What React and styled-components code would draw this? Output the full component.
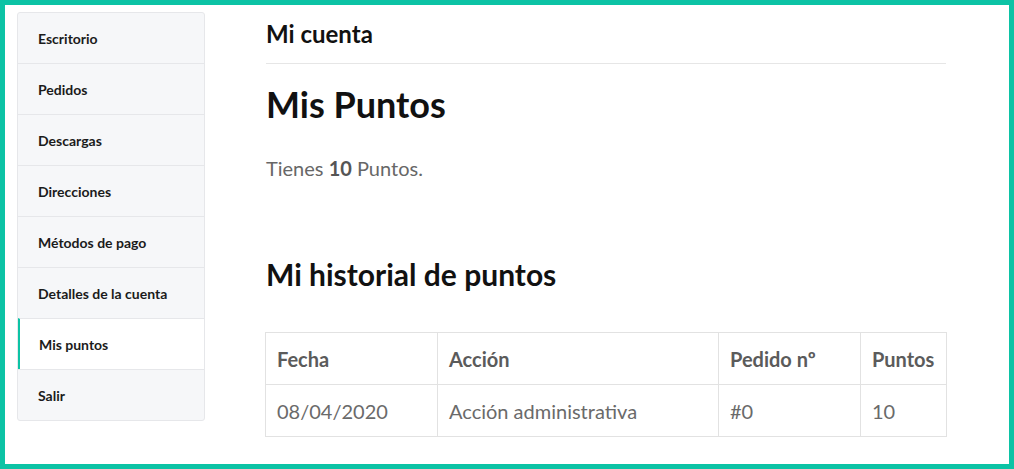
import React from "react";
import styled, { createGlobalStyle } from "styled-components";

const GlobalStyle = createGlobalStyle`
  * { box-sizing: border-box; }
  body {
    margin: 0;
    font-family: Lato, "Open Sans", sans-serif;
    background: #fff;
  }
`;

const Frame = styled.div`
  width: 1014px;
  height: 469px;
  border: 5px solid #0cc3a5;
  display: flex;
  align-items: flex-start;
  padding: 7px 0 0 12px;
  gap: 61px;
  overflow: hidden;
`;

const Sidebar = styled.nav`
  width: 188px;
  flex-shrink: 0;
  background: #f6f7f9;
  border: 1px solid #e6e7ea;
  border-radius: 3px;
  overflow: hidden;
`;

const NavItem = styled.div`
  height: 50px;
  display: flex;
  align-items: center;
  padding-left: ${(p) => (p.$active ? "19px" : "20px")};
  font-size: 14px;
  font-weight: 700;
  color: #1b1b1b;
  background: ${(p) => (p.$active ? "#fff" : "transparent")};
  border-left: ${(p) => (p.$active ? "2px solid #0cc3a5" : "none")};
  & + & {
    height: 51px;
    border-top: 1px solid #e6e7ea;
  }
`;

const Main = styled.main`
  width: 680px;
  flex-shrink: 0;
`;

const PageHeader = styled.header`
  padding: 7px 0 14px;
  border-bottom: 1px solid #e6e6e6;
`;

const PageTitle = styled.h2`
  margin: 0;
  font-size: 24px;
  line-height: 30px;
  font-weight: 700;
  color: #111;
`;

const H1 = styled.h1`
  margin: 20px 0 0;
  font-size: 36px;
  line-height: 40px;
  font-weight: 700;
  color: #111;
`;

const Balance = styled.p`
  margin: 31px 0 0;
  font-size: 20px;
  line-height: 27px;
  color: #676767;
  strong {
    font-weight: 700;
    color: #555;
  }
`;

const H2 = styled.h2`
  margin: 75px 0 0;
  font-size: 30px;
  line-height: 34px;
  font-weight: 700;
  color: #111;
`;

const Table = styled.table`
  margin-top: 41px;
  width: 681px;
  margin-left: -1px;
  border-collapse: collapse;
  table-layout: fixed;
  font-size: 20px;
`;

const Th = styled.th`
  height: 52px;
  padding: 0 11px;
  text-align: left;
  font-weight: 700;
  color: #5b5b5b;
  border: 1px solid #e2e2e2;
`;

const Td = styled.td`
  height: 52px;
  padding: 0 11px;
  color: #6a6a6a;
  border: 1px solid #e2e2e2;
`;

const navItems = [
  "Escritorio",
  "Pedidos",
  "Descargas",
  "Direcciones",
  "Métodos de pago",
  "Detalles de la cuenta",
  "Mis puntos",
  "Salir",
];

const columns = [
  { label: "Fecha", width: 172 },
  { label: "Acción", width: 281 },
  { label: "Pedido nº", width: 142 },
  { label: "Puntos", width: 86 },
];

const history = [
  { date: "08/04/2020", action: "Acción administrativa", order: "#0", points: 10 },
];

export default function App() {
  return (
    <>
      <GlobalStyle />
      <Frame>
        <Sidebar>
          {navItems.map((item) => (
            <NavItem key={item} $active={item === "Mis puntos"}>
              {item}
            </NavItem>
          ))}
        </Sidebar>
        <Main>
          <PageHeader>
            <PageTitle>Mi cuenta</PageTitle>
          </PageHeader>
          <H1>Mis Puntos</H1>
          <Balance>
            Tienes <strong>10</strong> Puntos.
          </Balance>
          <H2>Mi historial de puntos</H2>
          <Table>
            <colgroup>
              {columns.map((c) => (
                <col key={c.label} style={{ width: c.width }} />
              ))}
            </colgroup>
            <thead>
              <tr>
                {columns.map((c) => (
                  <Th key={c.label}>{c.label}</Th>
                ))}
              </tr>
            </thead>
            <tbody>
              {history.map((row) => (
                <tr key={row.date + row.action}>
                  <Td>{row.date}</Td>
                  <Td>{row.action}</Td>
                  <Td>{row.order}</Td>
                  <Td>{row.points}</Td>
                </tr>
              ))}
            </tbody>
          </Table>
        </Main>
      </Frame>
    </>
  );
}
